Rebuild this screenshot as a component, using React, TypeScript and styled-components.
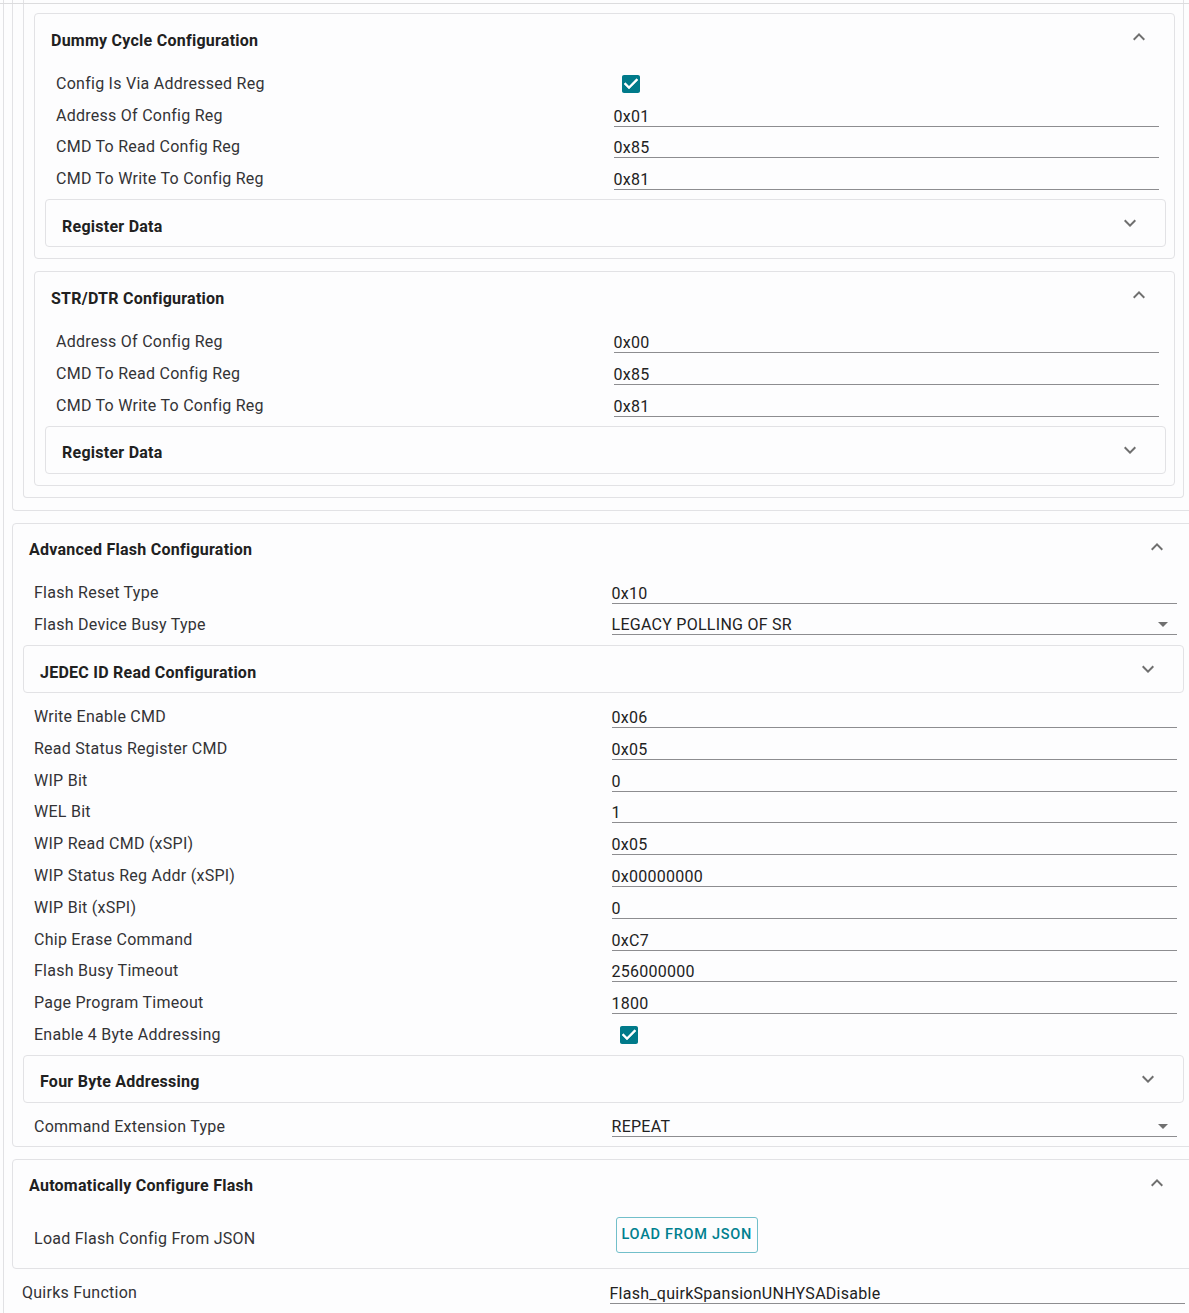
import React, { FC, ReactNode } from "react";
import styled, { createGlobalStyle, css } from "styled-components";

const GlobalStyle = createGlobalStyle`
  html, body {
    margin: 0;
    padding: 0;
    background: #fdfdfe;
  }
  body {
    font-family: Roboto, "Noto Sans", Arial, sans-serif;
    color: #2b2b2b;
    overflow: hidden;
  }
`;

const Page = styled.div`
  position: relative;
  width: 1189px;
  padding-left: 3px;
  box-sizing: border-box;
  overflow: hidden;
`;

// thin rule of the sticky toolbar that sits over the scrolled form
const TopRule = styled.div`
  position: absolute;
  top: 3px;
  left: 0;
  right: 0;
  border-top: 1px solid #dcdcde;
`;

const Frame = styled.div`
  border-left: 1px solid #e1e1e4;
  min-height: 1313px;
  display: flex;
  flex-direction: column;
`;

const Stack = styled.div`
  margin-left: 8px;
  width: 1181px;
  display: flex;
  flex-direction: column;
`;

const Card = styled.section<{ $continued?: boolean }>`
  box-sizing: border-box;
  border: 1px solid #e2e2e5;
  border-radius: 4px;
  margin: 4px 0 8px;
  background: #fdfdfe;
  display: flex;
  flex-direction: column;

  ${(p) =>
    p.$continued &&
    css`
      border-top: none;
      border-top-left-radius: 0;
      border-top-right-radius: 0;
      margin-top: 0;
    `}
`;

const CardBody = styled.div<{ $padTop?: number; $padBottom?: number }>`
  display: flex;
  flex-direction: column;
  padding: ${(p) => p.$padTop ?? 8}px 8px ${(p) => p.$padBottom ?? 3}px 10px;
`;

const Header = styled.div`
  height: 46px;
  box-sizing: border-box;
  padding: 6px 23px 0 16px;
  display: flex;
  align-items: center;
  justify-content: space-between;
  font-size: 16px;
  font-weight: 700;
  letter-spacing: 0.25px;
  color: #212121;

  svg {
    width: 24px;
    height: 24px;
    fill: #6f6f6f;
    margin-top: -6px;
  }
`;

const Row = styled.div<{ $height?: number; $pad?: string }>`
  display: grid;
  grid-template-columns: 1fr 1fr;
  align-items: center;
  min-height: ${(p) => p.$height ?? 31.8}px;
  padding: ${(p) => p.$pad ?? "0 7px 0 11px"};
`;

const Label = styled.div`
  font-size: 16px;
  line-height: 24px;
  letter-spacing: 0.26px;
  color: #333336;
`;

const ValueCell = styled.div<{ $top?: boolean }>`
  padding-left: 6px;
  display: flex;
  ${(p) => p.$top && "align-self: start;"}
`;

const Field = styled.div<{ $select?: boolean }>`
  flex: 1;
  display: flex;
  align-items: center;
  justify-content: space-between;
  padding-top: ${(p) => (p.$select ? 0 : 2)}px;
  font-size: 16px;
  line-height: 19px;
  letter-spacing: 0.27px;
  color: #222;
  border-bottom: 1px solid #8d8d90;
`;

const DropArrow = styled.span`
  width: 0;
  height: 0;
  margin-right: 9px;
  border-left: 5px solid transparent;
  border-right: 5px solid transparent;
  border-top: 5px solid #707070;
`;

const Check = styled.svg`
  width: 24px;
  height: 24px;
  margin-left: 5px;
  fill: #007a8a;
`;

const OutlineButton = styled.button`
  margin: 3px 0 0 4px;
  height: 36px;
  padding: 0 5px;
  border: 1px solid #72bfca;
  border-radius: 3px;
  background: transparent;
  color: #00808f;
  font-family: Roboto, Arial, sans-serif;
  font-size: 14.5px;
  font-weight: 500;
  letter-spacing: 0.72px;
  text-transform: uppercase;
  cursor: pointer;
`;

const ExpandMore = () => (
  <svg viewBox="0 0 24 24">
    <path d="M16.59 8.59 12 13.17 7.41 8.59 6 10l6 6 6-6z" />
  </svg>
);

const ExpandLess = () => (
  <svg viewBox="0 0 24 24">
    <path d="M12 8l-6 6 1.41 1.41L12 10.83l4.59 4.58L18 14z" />
  </svg>
);

type FieldDef = { label: string; value?: string; select?: boolean; checked?: boolean };

const FieldRow: FC<FieldDef> = ({ label, value, select, checked }) => (
  <Row>
    <Label>{label}</Label>
    <ValueCell>
      {checked ? (
        <Check viewBox="0 0 24 24">
          <path d="M19 3H5c-1.11 0-2 .9-2 2v14c0 1.1.89 2 2 2h14c1.11 0 2-.9 2-2V5c0-1.1-.89-2-2-2zm-9 14l-5-5 1.41-1.41L10 14.17l7.59-7.59L19 8l-9 9z" />
          <path d="M10 17l-5-5 1.41-1.41L10 14.17l7.59-7.59L19 8z" fill="#fff" />
        </Check>
      ) : (
        <Field $select={select}>
          {value}
          {select && <DropArrow />}
        </Field>
      )}
    </ValueCell>
  </Row>
);

const Collapsed: FC<{ title: string }> = ({ title }) => (
  <Card>
    <Header>
      {title}
      <ExpandMore />
    </Header>
  </Card>
);

const Expanded: FC<{ title: string; children: ReactNode }> = ({ title, children }) => (
  <Card>
    <Header>
      {title}
      <ExpandLess />
    </Header>
    <CardBody>{children}</CardBody>
  </Card>
);

const fields = (list: FieldDef[]) => list.map((f) => <FieldRow key={f.label} {...f} />);

const regFields = (addr: string): FieldDef[] => [
  { label: "Address Of Config Reg", value: addr },
  { label: "CMD To Read Config Reg", value: "0x85" },
  { label: "CMD To Write To Config Reg", value: "0x81" },
];

const jedecFields: FieldDef[] = [
  { label: "Write Enable CMD", value: "0x06" },
  { label: "Read Status Register CMD", value: "0x05" },
  { label: "WIP Bit", value: "0" },
  { label: "WEL Bit", value: "1" },
  { label: "WIP Read CMD (xSPI)", value: "0x05" },
  { label: "WIP Status Reg Addr (xSPI)", value: "0x00000000" },
  { label: "WIP Bit (xSPI)", value: "0" },
  { label: "Chip Erase Command", value: "0xC7" },
  { label: "Flash Busy Timeout", value: "256000000" },
  { label: "Page Program Timeout", value: "1800" },
  { label: "Enable 4 Byte Addressing", checked: true },
];

const App: FC = () => (
  <>
    <GlobalStyle />
    <Page>
      <TopRule />
      <Frame>
        <Stack>
          <Card $continued>
            <CardBody $padTop={0} $padBottom={4}>
              <Card $continued>
                <CardBody $padTop={9}>
                  <Expanded title="Dummy Cycle Configuration">
                    {fields([{ label: "Config Is Via Addressed Reg", checked: true }, ...regFields("0x01")])}
                    <Collapsed title="Register Data" />
                  </Expanded>
                  <Expanded title="STR/DTR Configuration">
                    {fields(regFields("0x00"))}
                    <Collapsed title="Register Data" />
                  </Expanded>
                </CardBody>
              </Card>
            </CardBody>
          </Card>

          <Expanded title="Advanced Flash Configuration">
            {fields([
              { label: "Flash Reset Type", value: "0x10" },
              { label: "Flash Device Busy Type", value: "LEGACY POLLING OF SR", select: true },
            ])}
            <Collapsed title="JEDEC ID Read Configuration" />
            {fields(jedecFields)}
            <Collapsed title="Four Byte Addressing" />
            <FieldRow label="Command Extension Type" value="REPEAT" select />
          </Expanded>

          <Expanded title="Automatically Configure Flash">
            <Row $height={51}>
              <Label>Load Flash Config From JSON</Label>
              <ValueCell $top>
                <OutlineButton type="button">Load From JSON</OutlineButton>
              </ValueCell>
            </Row>
          </Expanded>
        </Stack>

        <Row $height={32} $pad="0 4px 0 18px">
          <Label>Quirks Function</Label>
          <ValueCell>
            <Field>Flash_quirkSpansionUNHYSADisable</Field>
          </ValueCell>
        </Row>

        <Stack>
          <Card>
            <Header />
          </Card>
        </Stack>
      </Frame>
    </Page>
  </>
);

export default App;
